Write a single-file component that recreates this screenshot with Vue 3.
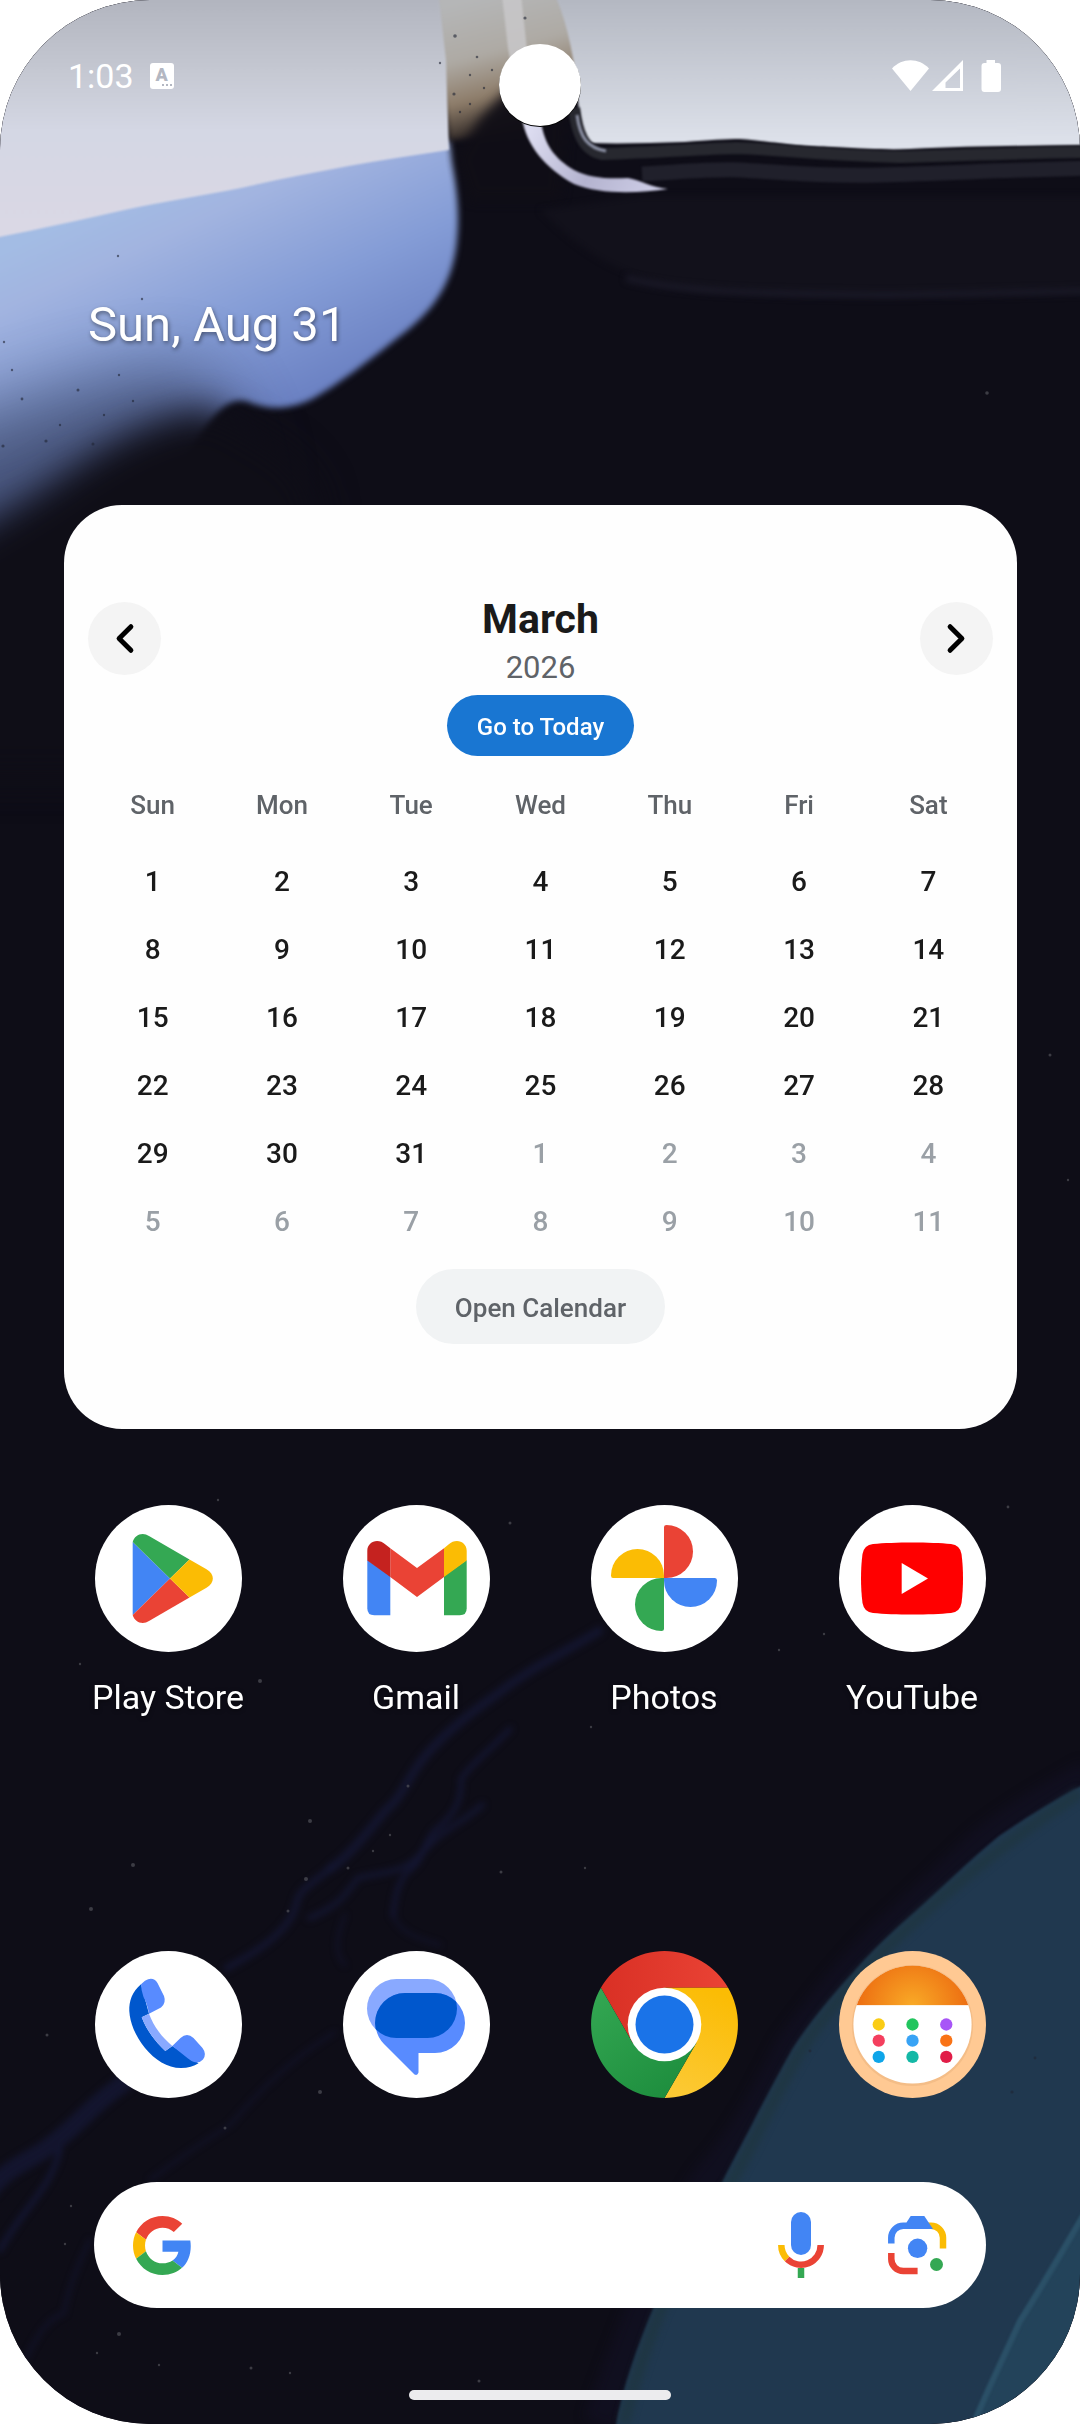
<script setup>
const weekdays = ['Sun', 'Mon', 'Tue', 'Wed', 'Thu', 'Fri', 'Sat']

const firstDay = new Date(2026, 2, 1)
const weeks = Array.from({ length: 6 }, (_, week) =>
  Array.from({ length: 7 }, (_, day) => {
    const date = new Date(2026, 2, 1 - firstDay.getDay() + week * 7 + day)
    return { key: date.getTime(), label: date.getDate(), outside: date.getMonth() !== 2 }
  })
)

const calendarDots = [
  '#facc15', '#22c55e', '#a855f7',
  '#f43f5e', '#38a3f5', '#f97316',
  '#0ea5e9', '#14b8a6', '#e11d48'
].map((color, i) => ({ color, x: 40 + (i % 3) * 34, y: 74 + Math.floor(i / 3) * 16.3 }))

const stars = [
  [260, 1681, 2], [133, 1865, 2], [306, 1879, 2], [310, 1821, 2], [91, 1909, 2], [408, 1786, 1.5],
  [348, 1868, 1.5], [373, 1851, 1.2], [390, 1835, 1.2], [501, 1872, 1.5], [320, 2092, 2], [225, 2128, 1.5],
  [47, 2035, 1.5], [119, 2334, 2], [97, 2353, 1.2], [159, 2365, 1.2], [251, 2368, 1.5], [290, 2373, 1.2],
  [479, 2381, 1.5], [585, 1868, 1.2], [288, 1911, 1.5], [987, 393, 1.8], [510, 1523, 1.5], [779, 1650, 1.2],
  [1008, 1507, 1.4], [824, 1634, 1.2], [218, 1500, 1.2], [591, 1727, 1.2], [80, 1664, 1.2], [71, 2206, 1.2],
  [65, 2244, 1.2], [1050, 1055, 1.5], [1068, 1180, 1.2]
]

const specks = [
  [46, 441, 1.6], [93, 444, 1.5], [3, 446, 1.6], [78, 390, 1.5], [118, 256, 1.2], [142, 299, 1.2],
  [22, 399, 1.4], [133, 401, 1.2], [455, 36, 1.8], [525, 18, 1.6], [454, 94, 1.6], [440, 63, 1.2],
  [477, 57, 1.3], [470, 75, 1.2], [4, 342, 1.2], [119, 375, 1.2], [12, 370, 1.2], [60, 425, 1.2],
  [104, 415, 1.2], [460, 112, 1.2], [470, 104, 1.2], [484, 88, 1.2], [492, 70, 1.2], [810, 2051, 1.4],
  [1035, 2058, 1.4], [1012, 2092, 1.6]
]
</script>

<template>
  <div class="phone">
    <svg class="wallpaper" viewBox="0 0 1080 2424" preserveAspectRatio="xMidYMid slice" color-interpolation-filters="sRGB" aria-hidden="true">
      <defs>
        <linearGradient id="mist" x1="0" y1="0" x2="0" y2="237" gradientUnits="userSpaceOnUse">
          <stop offset="0" stop-color="#b2b5bf" />
          <stop offset="0.3" stop-color="#c5c8d2" />
          <stop offset="0.55" stop-color="#d4d7e4" />
          <stop offset="1" stop-color="#dbd8e5" />
        </linearGradient>
        <linearGradient id="mistRight" x1="0" y1="0" x2="0" y2="148" gradientUnits="userSpaceOnUse">
          <stop offset="0" stop-color="#b4b8c2" />
          <stop offset="1" stop-color="#dfe3ec" />
        </linearGradient>
        <linearGradient id="drop" x1="180" y1="170" x2="290" y2="410" gradientUnits="userSpaceOnUse">
          <stop offset="0" stop-color="#a3bce4" />
          <stop offset="0.2" stop-color="#a2b4e0" />
          <stop offset="0.6" stop-color="#849cd6" />
          <stop offset="1" stop-color="#6a80c2" />
        </linearGradient>
        <linearGradient id="smoke" x1="470" y1="0" x2="505" y2="135" gradientUnits="userSpaceOnUse">
          <stop offset="0" stop-color="#b5b6b7" />
          <stop offset="0.4" stop-color="#aeaaa4" />
          <stop offset="0.7" stop-color="#8d7c69" />
          <stop offset="1" stop-color="#221c1c" />
        </linearGradient>
        <linearGradient id="ribbon" x1="530" y1="130" x2="660" y2="190" gradientUnits="userSpaceOnUse">
          <stop offset="0" stop-color="#dcdcf0" />
          <stop offset="0.5" stop-color="#b4b3cf" />
          <stop offset="1" stop-color="#cfcfe8" />
        </linearGradient>
        <filter id="blur1" filterUnits="userSpaceOnUse" x="-100" y="-100" width="1280" height="2624"><feGaussianBlur stdDeviation="1" /></filter>
        <filter id="blur3" filterUnits="userSpaceOnUse" x="-100" y="-100" width="1280" height="2624"><feGaussianBlur stdDeviation="3" /></filter>
        <filter id="blur6" filterUnits="userSpaceOnUse" x="-100" y="-100" width="1280" height="2624"><feGaussianBlur stdDeviation="6" /></filter>
        <filter id="blur18" filterUnits="userSpaceOnUse" x="-200" y="0" width="900" height="900"><feGaussianBlur stdDeviation="18" /></filter>
        <filter id="blur36" filterUnits="userSpaceOnUse" x="-300" y="0" width="1100" height="1000"><feGaussianBlur stdDeviation="36" /></filter>
      </defs>
      <rect width="1080" height="2424" fill="#0e0d17" />

      <path d="M-60 160L449 140C456 180 460 210 457 240C453 285 432 312 400 336C370 360 335 387 310 400C288 410 268 410 248 402C230 396 215 410 190 450L100 660H-60Z" fill="url(#drop)" filter="url(#blur3)" />
      <path d="M-100 440C0 410 90 370 190 368C215 380 235 430 250 480L200 740H-100Z" fill="#10121f" opacity="0.45" filter="url(#blur36)" />
      <path d="M-100 570C-40 540 20 505 69 470C110 442 150 420 200 410C225 412 240 428 262 440C290 454 310 474 320 504L300 780H-100Z" fill="#0f0e17" filter="url(#blur18)" />

      <path d="M425 -30H590L600 80L530 134L449 140Z" fill="url(#smoke)" filter="url(#blur3)" />
      <path d="M456 158L480 118L505 92L530 80L570 90L560 200L470 200Z" fill="#100e16" opacity="0.95" filter="url(#blur6)" />
      <path d="M-10 -10H438L446 60L449 150C380 160 310 172 241 188C200 196 160 202 120 211C80 220 40 229 -10 239Z" fill="url(#mist)" filter="url(#blur1)" />
      <path d="M502 -5H521L527 50L534 70H512L508 48Z" fill="#c9c8ca" opacity="0.85" filter="url(#blur1)" />
      <path d="M555 -5C568 25 575 60 578 100C580 125 584 143 590 143C620 144 650 143 685 142C710 140 725 139 740 139C770 141 790 146 833 147C870 149 890 150 910 149C970 146 1020 146 1090 145V-5Z" fill="url(#mistRight)" filter="url(#blur1)" />
      <path d="M574 108C577 132 583 150 602 154C660 152 700 149 736 148C780 149 810 155 900 157C960 155 1020 153 1090 152" fill="none" stroke="#27282f" stroke-width="12" filter="url(#blur1)" />
      <path d="M577 115C580 138 588 148 606 151" fill="none" stroke="#8d92a6" stroke-width="3" filter="url(#blur1)" />
      <path d="M642 174C680 172 710 169 740 170C790 173 820 176 880 175C950 173 1010 170 1090 168" fill="none" stroke="#20202b" stroke-width="15" filter="url(#blur1)" />
      <path d="M540 210C580 250 620 280 700 290C800 297 950 297 1090 290V196H640Z" fill="#12111b" filter="url(#blur3)" />
      <path d="M522 118C526 145 545 168 574 184C600 195 640 193 668 189C650 187 640 180 628 178C606 179 590 178 574 170C554 158 545 145 541 122Z" fill="url(#ribbon)" filter="url(#blur1)" />
      <path d="M626 278C680 292 760 294 880 295C950 295 1020 292 1090 291" fill="none" stroke="#1b1a28" stroke-width="6" filter="url(#blur3)" />

      <g fill="none" stroke="#151838" stroke-linecap="round" filter="url(#blur3)">
        <path d="M599 1631C560 1655 530 1668 496 1695C460 1720 430 1745 413 1773C400 1795 396 1802 386 1810C365 1835 350 1855 331 1868" stroke-width="9" opacity="0.7" />
        <path d="M331 1868C310 1885 298 1890 296 1905C290 1930 260 1950 227 1968" stroke-width="7" opacity="0.7" />
        <path d="M510 1729C490 1750 470 1765 461 1779C462 1800 455 1815 434 1831C420 1850 425 1860 406 1873C395 1890 395 1900 393 1915" stroke-width="5" opacity="0.8" />
        <path d="M482 1805C460 1825 440 1830 420 1855C400 1875 380 1872 358 1878C345 1895 340 1905 310 1918" stroke-width="6" opacity="0.7" />
        <path d="M393 1915C400 1935 425 1940 440 1945M345 1915C335 1940 335 1955 345 1965" stroke-width="3" opacity="0.6" />
        <path d="M124 2083C90 2105 75 2130 41 2152C20 2165 5 2170 -10 2190" stroke-width="18" opacity="0.7" />
        <path d="M60 2150C50 2190 25 2205 0 2250" stroke-width="5" opacity="0.9" />
        <path d="M335 2032C290 2060 260 2090 230 2125C190 2150 170 2165 150 2180" stroke-width="3" opacity="0.6" />
        <path d="M90 2240C75 2270 68 2290 64 2313C45 2320 35 2340 25 2360" stroke-width="3" opacity="0.7" />
      </g>

      <path d="M1090 1776C1050 1800 1020 1815 985 1843C950 1875 930 1895 903 1920C870 1948 830 1995 792 2047C765 2100 745 2140 708 2180C670 2240 640 2310 600 2424" fill="none" stroke="#131125" stroke-width="34" filter="url(#blur6)" opacity="0.6" />
      <path d="M1090 1781C1055 1800 1030 1815 999 1836C970 1860 945 1885 923 1905C895 1930 872 1950 854 1972C828 2000 808 2025 792 2050C778 2075 765 2100 757 2115C746 2137 733 2160 723 2181C695 2225 668 2275 654 2307C638 2345 623 2385 615 2430H1090Z" fill="#20384f" filter="url(#blur1)" />
      <path d="M1080 1793C1010 1838 960 1880 925 1912C860 1970 820 2020 800 2052C770 2105 750 2150 730 2185C700 2230 675 2280 660 2312C645 2350 632 2390 624 2424" fill="none" stroke="#1f3644" stroke-width="12" filter="url(#blur3)" />
      <path d="M1090 2200C1060 2255 1040 2290 1019 2320C1000 2365 985 2395 971 2430H1090Z" fill="#23435a" filter="url(#blur1)" />
      <path d="M1090 2204C1060 2255 1040 2290 1020 2321C1000 2365 985 2395 971 2430" fill="none" stroke="#2b5067" stroke-width="6" filter="url(#blur1)" />

      <circle v-for="([x, y, r], i) in stars" :key="'s' + i" :cx="x" :cy="y" :r="r" fill="#5c5b63" opacity="0.6" />
      <circle v-for="([x, y, r], i) in specks" :key="'k' + i" :cx="x" :cy="y" :r="r" fill="#1f2433" opacity="0.6" />
    </svg>

    <div class="camera"></div>

    <header class="status">
      <time class="clock">1:03</time>
      <span class="badge">A<i></i></span>
      <svg class="signals" width="109" height="32" viewBox="0 0 109 32" role="img" aria-label="Wi-Fi, mobile signal and battery">
        <path d="M0 8.500C10 -2.500 27 -2.500 37 8.500L18.500 31Z" fill="#fff" />
        <path d="M71 0V31H40ZM68 8.500L53.500 22.500V28H68Z" fill="#fff" fill-rule="evenodd" />
        <path d="M94.500 0H103V3H106Q109 3 109 6V29Q109 32 106 32H92.500Q89.500 32 89.500 29V6Q89.500 3 92.500 3H94.500Z" fill="#fff" />
      </svg>
    </header>

    <p class="today">Sun, Aug 31</p>

    <section class="card" aria-label="Calendar">
      <div class="card-head">
        <button class="arrow" type="button" aria-label="Previous month">
          <svg viewBox="0 0 74 74"><path d="M43.500 25L31.500 37L43.500 49" /></svg>
        </button>
        <div class="title">
          <h1>March</h1>
          <p>2026</p>
        </div>
        <button class="arrow" type="button" aria-label="Next month">
          <svg viewBox="0 0 74 74"><path d="M30.500 25L42.500 37L30.500 49" /></svg>
        </button>
      </div>
      <button class="go-today" type="button">Go to Today</button>
      <table>
        <thead>
          <tr><th v-for="day in weekdays" :key="day" scope="col">{{ day }}</th></tr>
        </thead>
        <tbody>
          <tr v-for="week in weeks" :key="week[0].key">
            <td v-for="day in week" :key="day.key" :class="{ outside: day.outside }">{{ day.label }}</td>
          </tr>
        </tbody>
      </table>
      <button class="open-calendar" type="button">Open Calendar</button>
    </section>

    <nav class="apps" aria-label="Apps">
      <a class="app" href="#play">
        <svg viewBox="0 0 147 147">
          <circle cx="73.5" cy="73.5" r="73.5" fill="#fff" />
          <path d="M37.700 37V110L75 73.500Z" fill="#4285f4" />
          <path d="M37.700 37C39 32 43 29 47.700 29C50 29 52 29.800 54 31L94.500 54.500L75 73.500Z" fill="#34a853" />
          <path d="M37.700 110C39 114.500 43 118 47.700 118C50 118 52 117 54 116L94.500 92.500L75 73.500Z" fill="#ea4335" />
          <path d="M94.500 54.500L111.500 64.300C120 69 120 78 111.500 82.700L94.500 92.500L75 73.500Z" fill="#fbbc04" />
        </svg>
        <span>Play Store</span>
      </a>
      <a class="app" href="#gmail">
        <svg viewBox="0 0 147 147">
          <circle cx="73.5" cy="73.5" r="73.5" fill="#fff" />
          <path d="M24.300 55L47.300 71V110.300H31.300Q24.300 110.300 24.300 103.300Z" fill="#4285f4" />
          <path d="M123.700 55L101 71V110.300H116.700Q123.700 110.300 123.700 103.300Z" fill="#34a853" />
          <path d="M47.300 43.300L74 63L101 43.300V72L74 92L47.300 72Z" fill="#ea4335" />
          <path d="M24.300 55.500V46C24.300 36.500 35 32.500 42.500 39.500L47.300 43.300V72Z" fill="#c5221f" />
          <path d="M123.700 55.500V46C123.700 36.500 113 32.500 105.500 39.500L101 43.300V72Z" fill="#fbbc04" />
        </svg>
        <span>Gmail</span>
      </a>
      <a class="app" href="#photos">
        <svg viewBox="0 0 147 147">
          <circle cx="73.5" cy="73.5" r="73.5" fill="#fff" />
          <path d="M73 22Q73 20 75.500 20A26.500 26.500 0 0 1 75.500 73H73Z" fill="#ea4335" />
          <path d="M73 22Q73 20 75.500 20A26.500 26.500 0 0 1 75.500 73H73Z" fill="#4285f4" transform="rotate(90 73 73)" />
          <path d="M73 22Q73 20 75.500 20A26.500 26.500 0 0 1 75.500 73H73Z" fill="#34a853" transform="rotate(180 73 73)" />
          <path d="M73 22Q73 20 75.500 20A26.500 26.500 0 0 1 75.500 73H73Z" fill="#fbbc04" transform="rotate(270 73 73)" />
        </svg>
        <span>Photos</span>
      </a>
      <a class="app" href="#youtube">
        <svg viewBox="0 0 147 147">
          <circle cx="73.5" cy="73.5" r="73.5" fill="#fff" />
          <path d="M34 39C55 37 92 37 112 39Q121 40 122.500 49C124.500 64 124.500 82 122.500 98Q121 107 112 108C92 110 55 110 34 108Q25 107 23.500 98C21.500 82 21.500 64 23.500 49Q25 40 34 39Z" fill="#f00" />
          <path d="M62.700 58V89L89 73.500Z" fill="#fff" />
        </svg>
        <span>YouTube</span>
      </a>
    </nav>

    <footer class="bottom">
      <nav class="apps" aria-label="Dock">
        <a class="app" href="#phone" aria-label="Phone">
          <svg viewBox="0 0 147 147">
            <circle cx="73.5" cy="73.5" r="73.5" fill="#fff" />
            <path d="M46 33.300C37 41 34 50 34.300 60C35 72 40 84 50 97C60 109 72 117 86 117C93 117 99 115.500 103.500 112.300L77.300 95L70.300 100C60 90 52 80 46.700 66.300L54 62.700Z" fill="#0057cd" />
            <path d="M46.700 66.300L54 62.700C59 76 67 86 77.300 95L70.300 100C60 90 52 80 46.700 66.300Z" fill="#89a9ff" />
            <path d="M46 33.300L50 29.700Q58 25 62.500 32L69 45Q71.500 52 66 56.500L54 62.700Q52 52 48.500 46Q46 39 46 33.300Z" fill="#588bff" />
            <path d="M77.300 95L85.500 87Q92 81 98.500 87L107.500 97Q112 103 108 108.500Q104.500 112.500 99 111Q96 110 93 107.500Z" fill="#588bff" />
          </svg>
        </a>
        <a class="app" href="#messages" aria-label="Messages">
          <svg viewBox="0 0 147 147">
            <clipPath id="bubble"><rect x="32" y="42" width="90" height="60" rx="30" /></clipPath>
            <circle cx="73.5" cy="73.5" r="73.5" fill="#fff" />
            <rect x="24" y="28" width="90" height="59" rx="29.5" fill="#89a9ff" />
            <path d="M62 42H92A30 30 0 0 1 92 102H75.500V121.500Q74.500 125 71.500 123.500L41 93A30 30 0 0 1 62 42Z" fill="#588bff" />
            <rect x="24" y="28" width="90" height="59" rx="29.5" fill="#0057cd" clip-path="url(#bubble)" />
          </svg>
        </a>
        <a class="app" href="#chrome" aria-label="Chrome">
          <svg viewBox="0 0 147 147">
            <defs>
              <linearGradient id="cr"><stop offset="0" stop-color="#d93025" /><stop offset="1" stop-color="#ea4335" /></linearGradient>
              <linearGradient id="cy" x1="0.3" y1="1" x2="0.6" y2="0"><stop offset="0" stop-color="#fcc934" /><stop offset="1" stop-color="#fbbc04" /></linearGradient>
              <linearGradient id="cg" x1="0.7" y1="1" x2="0" y2="0"><stop offset="0" stop-color="#1e8e3e" /><stop offset="1" stop-color="#34a853" /></linearGradient>
            </defs>
            <path d="M9.900 36.750A73.500 73.500 0 0 1 137.100 36.750H73.500L41.700 91.900Z" fill="url(#cr)" />
            <path d="M137.100 36.750A73.500 73.500 0 0 1 73.500 147L105.300 91.900L73.500 36.750Z" fill="url(#cy)" />
            <path d="M73.500 147A73.500 73.500 0 0 1 9.900 36.750L41.700 91.900H105.300Z" fill="url(#cg)" />
            <circle cx="73.5" cy="73.5" r="36.8" fill="#fff" />
            <circle cx="73.5" cy="73.5" r="29" fill="#1a73e8" />
          </svg>
        </a>
        <a class="app" href="#calendar" aria-label="Calendar">
          <svg viewBox="0 0 148 148">
            <defs>
              <radialGradient id="sun" cx="74" cy="56" r="60" gradientUnits="userSpaceOnUse">
                <stop offset="0" stop-color="#f9ab27" /><stop offset="1" stop-color="#ec6a10" />
              </radialGradient>
              <clipPath id="face"><circle cx="74" cy="74" r="59.5" /></clipPath>
            </defs>
            <circle cx="74" cy="74" r="74" fill="#ffc993" />
            <circle cx="74" cy="75" r="61" fill="#eab27c" opacity="0.5" />
            <circle cx="74" cy="74" r="59.5" fill="#fff" />
            <rect x="14" y="14" width="120" height="40.5" fill="url(#sun)" clip-path="url(#face)" />
            <circle v-for="dot in calendarDots" :key="dot.color" :cx="dot.x" :cy="dot.y" r="6.2" :fill="dot.color" />
          </svg>
        </a>
      </nav>

      <form class="search" role="search" @submit.prevent>
        <svg width="59" height="59" viewBox="0 0 48 48" aria-hidden="true">
          <path fill="#ea4335" d="M24 9.500c3.540 0 6.710 1.220 9.210 3.600l6.850-6.850C35.900 2.380 30.470 0 24 0 14.620 0 6.510 5.380 2.560 13.220l7.980 6.190C12.430 13.720 17.740 9.500 24 9.500z" />
          <path fill="#4285f4" d="M46.980 24.550c0-1.570-.15-3.090-.38-4.550H24v9.020h12.940c-.58 2.960-2.260 5.480-4.780 7.180l7.730 6c4.510-4.180 7.090-10.360 7.090-17.650z" />
          <path fill="#fbbc04" d="M10.530 28.590c-.48-1.450-.76-2.990-.76-4.590s.27-3.140.76-4.590l-7.980-6.190C.92 16.460 0 20.120 0 24c0 3.880.92 7.540 2.560 10.780l7.970-6.190z" />
          <path fill="#34a853" d="M24 48c6.480 0 11.930-2.130 15.890-5.810l-7.730-6c-2.150 1.450-4.920 2.300-8.160 2.300-6.260 0-11.570-4.220-13.470-9.910l-7.980 6.190C6.510 42.620 14.620 48 24 48z" />
        </svg>
        <input type="search" aria-label="Search" />
        <button type="button" aria-label="Voice search">
          <svg width="46" height="66" viewBox="0 0 46 66" fill="none">
            <rect x="13" y="0" width="20" height="43" rx="10" fill="#4285f4" />
            <path d="M3.300 33A19.700 19.700 0 0 0 9.100 47" stroke="#fbbc04" stroke-width="6.500" />
            <path d="M9.100 47A19.700 19.700 0 0 0 42.700 33" stroke="#ea4335" stroke-width="6.500" />
            <path d="M23 56V66" stroke="#34a853" stroke-width="6.500" />
          </svg>
        </button>
        <button type="button" aria-label="Search with Lens">
          <svg width="59" height="59" viewBox="0 0 59 59" fill="none">
            <path d="M39 9.700H43A12 12 0 0 1 55 21.700V32.500" stroke="#fbbc04" stroke-width="6.500" />
            <path d="M3.300 27.500V21.700A12 12 0 0 1 15.300 9.700H40" stroke="#4285f4" stroke-width="6.500" />
            <path d="M18.500 6.500L22.700 0H36.300L45 13H22Z" fill="#4285f4" />
            <path d="M3.300 37V43A12 12 0 0 0 15.300 55H29.600" stroke="#ea4335" stroke-width="6.500" />
            <circle cx="29.600" cy="32.300" r="9.700" fill="#4285f4" />
            <circle cx="48.500" cy="48.500" r="6.500" fill="#34a853" />
          </svg>
        </button>
      </form>

      <div class="handle"></div>
    </footer>
  </div>
</template>

<style>
body {
  margin: 0;
  background: #fff;
}
</style>

<style scoped>
.phone {
  position: relative;
  display: flex;
  flex-direction: column;
  min-height: 100vh;
  overflow: hidden;
  border-radius: 150px;
  background: #0e0d17;
  color: #fff;
  font-family: Roboto, "Liberation Sans", sans-serif;
  isolation: isolate;
}
.wallpaper {
  position: absolute;
  inset: 0;
  z-index: -1;
  width: 100%;
  height: 100%;
}
.camera {
  position: absolute;
  top: 44px;
  left: 50%;
  width: 82px;
  height: 82px;
  margin-left: -41px;
  border-radius: 50%;
  background: #fff;
  box-shadow: 0 1px 0 #000;
}
h1,
p {
  margin: 0;
}
button {
  padding: 0;
  border: 0;
  background: none;
  font-family: inherit;
}
svg {
  display: block;
}
.status {
  display: flex;
  align-items: center;
  height: 40px;
  padding: 56px 79px 0 68px;
}
.clock {
  font-size: 34px;
  line-height: 40px;
}
.badge {
  display: flex;
  flex-direction: column;
  align-items: center;
  width: 24px;
  height: 26px;
  margin-left: 16px;
  border-radius: 3px;
  background: #fff;
  color: #b3b7c2;
  font-size: 18px;
  font-weight: 900;
  line-height: 24px;
}
.badge i {
  align-self: flex-end;
  width: 10px;
  margin: -3px 2px 0;
  border-top: 2px dotted #b3b7c2;
}
.signals {
  margin-left: auto;
}
.today {
  margin: 199px 88px 0;
  font-size: 49px;
  line-height: 60px;
  text-shadow: 1px 2px 4px rgba(0, 0, 0, 0.45);
}
.card {
  display: flex;
  flex-direction: column;
  align-items: center;
  margin: 150px 63px 0 64px;
  padding: 89px 24px 85px;
  border-radius: 58px;
  background: #fefefe;
  color: #5f6368;
}
.card-head {
  display: flex;
  align-items: flex-start;
  justify-content: space-between;
  align-self: stretch;
}
.title {
  text-align: center;
}
.title h1 {
  color: #1a1a1a;
  font-size: 41px;
  font-weight: 700;
  line-height: 50px;
}
.title p {
  margin-top: 5px;
  font-size: 31px;
  line-height: 38px;
}
.arrow {
  width: 73px;
  height: 73px;
  margin-top: 8px;
  border-radius: 50%;
  background: #f4f4f4;
}
.arrow path {
  fill: none;
  stroke: #000;
  stroke-width: 5;
  stroke-linecap: round;
  stroke-linejoin: round;
}
.go-today {
  height: 61px;
  margin-top: 8px;
  padding: 3px 30px 0;
  border-radius: 31px;
  background: #1976d2;
  color: #fff;
  font-size: 24px;
  font-weight: 500;
}
table {
  width: 100%;
  margin-top: 7px;
  border-collapse: collapse;
  table-layout: fixed;
  text-align: center;
}
th {
  height: 84px;
  padding: 0;
  font-size: 26px;
  font-weight: 500;
}
td {
  height: 68px;
  padding: 0;
  color: #1a1a1a;
  font-size: 28px;
  font-weight: 500;
}
td.outside {
  color: #9aa0a6;
}
.open-calendar {
  height: 75px;
  margin-top: 14px;
  padding: 3px 39px 0;
  border-radius: 38px;
  background: #f1f3f4;
  color: #5f6368;
  font-size: 26px;
  font-weight: 500;
}
.apps {
  display: grid;
  grid-template-columns: repeat(4, 1fr);
  margin: 76px 44px 0;
}
.app {
  display: flex;
  flex-direction: column;
  align-items: center;
  gap: 25px;
  color: #fff;
  font-size: 34px;
  line-height: 40px;
  text-decoration: none;
  text-shadow: 0 1px 4px rgba(0, 0, 0, 0.5);
}
.app svg {
  width: 147px;
  height: 147px;
}
.bottom {
  display: flex;
  flex-direction: column;
  margin-top: auto;
  padding: 80px 0 24px;
}
.bottom .apps {
  margin-top: 0;
}
.search {
  display: flex;
  align-items: center;
  height: 126px;
  margin: 84px 94px 0;
  padding: 0 39px;
  border-radius: 63px;
  background: #fff;
}
.search input {
  flex: 1;
  min-width: 0;
  height: 80px;
  margin: 0 24px;
  border: 0;
  outline: 0;
  background: transparent;
  font: 34px Roboto, sans-serif;
}
.search button + button {
  margin-left: 64px;
}
.handle {
  align-self: center;
  width: 262px;
  height: 10px;
  margin-top: 82px;
  border-radius: 5px;
  background: #ececee;
}
</style>
